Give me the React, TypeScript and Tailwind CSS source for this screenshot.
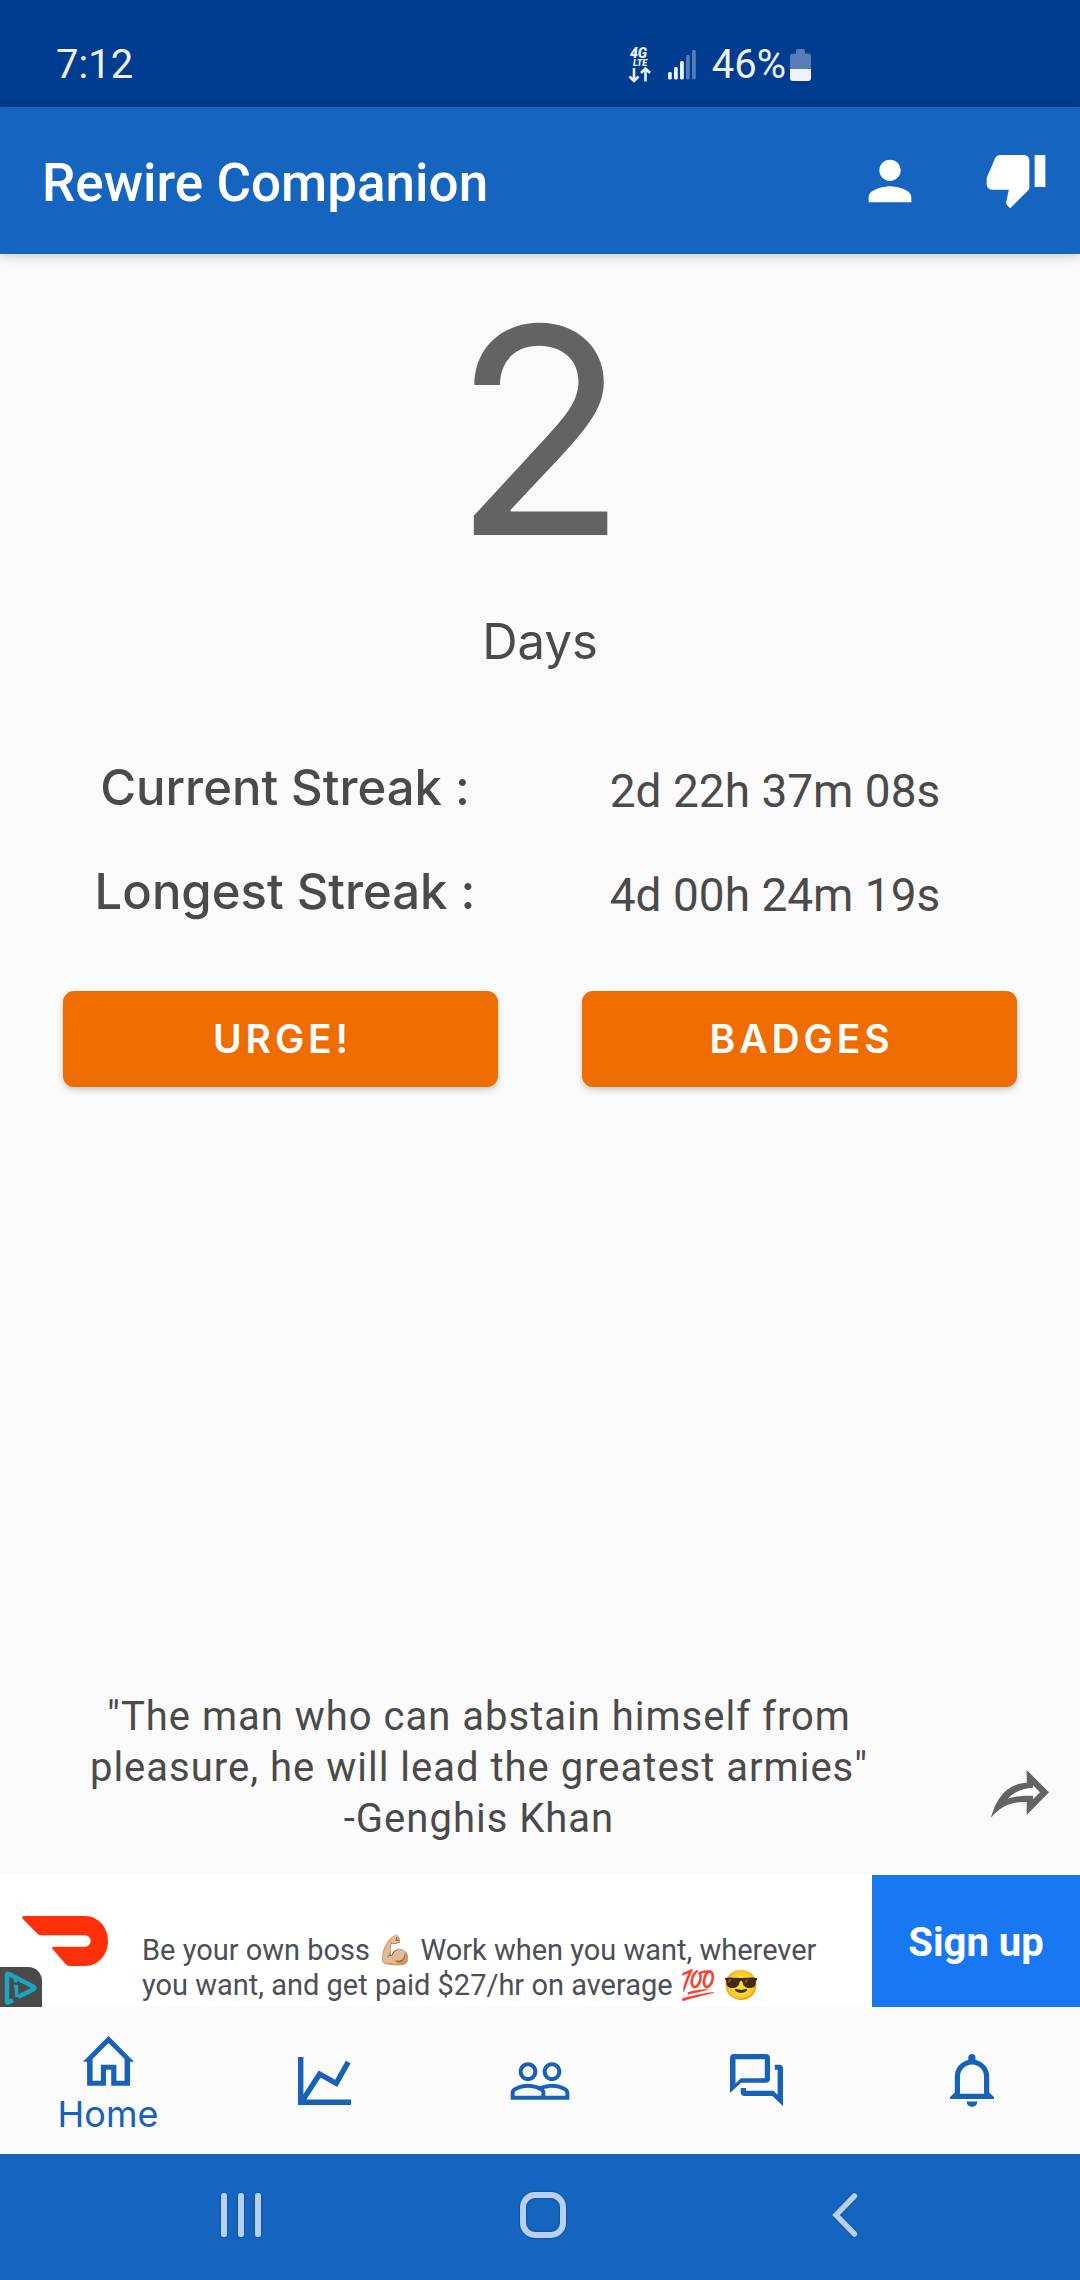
import type { ReactNode } from 'react';
import { MdPeopleOutline, MdPerson, MdThumbDown } from 'react-icons/md';

type Streak = { label: string; value: string };

const STREAKS: ReadonlyArray<Streak> = [
    { label: 'Current Streak :', value: '2d 22h 37m 08s' },
    { label: 'Longest Streak :', value: '4d 00h 24m 19s' },
];

const ACTIONS: ReadonlyArray<string> = ['URGE!', 'BADGES'];

type Tab = { name: string; icon: ReactNode; active?: boolean };

const TABS: ReadonlyArray<Tab> = [
    { name: 'Home', icon: <HomeIcon />, active: true },
    { name: 'Statistics', icon: <ChartIcon /> },
    { name: 'Community', icon: <MdPeopleOutline className="size-16" aria-hidden /> },
    { name: 'Chat', icon: <ChatIcon /> },
    { name: 'Notifications', icon: <BellIcon /> },
];

function HomeIcon() {
    return (
        <svg width="51" height="50" viewBox="0 0 51 50" fill="currentColor" fillRule="evenodd" aria-hidden>
            <path d="M25.5 0L51 25.7H47.1V49.7H28.2V33.7H23V49.7H4.1V25.7H0ZM25.5 7L9.6 23V44.7H17.9V28.7H33.4V44.7H41.6V23Z" />
        </svg>
    );
}

function ChartIcon() {
    return (
        <svg width="53" height="48" viewBox="0 0 53 48" fill="none" stroke="currentColor" strokeWidth="5.4" aria-hidden>
            <path d="M2.7 0V45.3H53" />
            <path d="M4.5 43.5L21.6 17L38.2 26.3L50.2 5" />
        </svg>
    );
}

function ChatIcon() {
    return (
        <svg width="53" height="53" viewBox="0 0 53 53" fill="currentColor" fillRule="evenodd" aria-hidden>
            <path d="M4 0H36a4 4 0 0 1 4 4V24.7a4 4 0 0 1-4 4H11L0 39V4a4 4 0 0 1 4-4ZM5.5 5.3V29.5L10.8 24.2H34.8V5.3Z" />
            <path d="M44.8 10.7H49a4 4 0 0 1 4 4V52L42.4 42H14.7a4 4 0 0 1-4-4V34H15.9V36.7H43.5L47.6 40.8V15.7H44.8Z" />
        </svg>
    );
}

function BellIcon() {
    return (
        <svg width="44" height="53" viewBox="0 0 44 53" fill="currentColor" fillRule="evenodd" aria-hidden>
            <path d="M18.3 3.6a3.6 3.6 0 0 1 7.2 0V5.9A17.2 17.2 0 0 1 39.2 22.5V38.5L44 43.3V45H0V43.3L4.8 38.5V22.5A17.2 17.2 0 0 1 18.3 5.9ZM10 39.7H34V22.6a12 12 0 0 0-24 0Z" />
            <path d="M16.6 47.4H27.4a5.4 5.4 0 0 1-10.8 0Z" />
        </svg>
    );
}

function ShareIcon() {
    return (
        <svg width="58" height="48" viewBox="0 0 58 48" aria-hidden>
            <path d="M0 47.7C5 30 14 14 35.7 12.7V0L58 22.3L35.7 45V32C22 31 9 36 0 47.7Z" fill="#636363" />
            <path d="M16.7 28.7C23 22 31 18.5 42 17.7V15.3L49 22.3L42 29.3V25.7C32 25.5 24 26 16.7 28.7Z" fill="#fff" />
        </svg>
    );
}

function NetworkIcon() {
    return (
        <svg width="24" height="40" viewBox="0 0 24 40" fill="#eef3ff" aria-hidden>
            <text x="2" y="13" fontFamily="Roboto, sans-serif" fontSize="14" fontWeight="900" fontStyle="italic">
                4G
            </text>
            <text x="5" y="21" fontFamily="Roboto, sans-serif" fontSize="9" fontWeight="900" fontStyle="italic">
                LTE
            </text>
            <path d="M6 23V35.5M1.5 31.5L6 36L10.5 31.5M17.5 36.5V24M13 28L17.5 23.5L22 28" fill="none" stroke="#eef3ff" strokeWidth="2.6" />
        </svg>
    );
}

function SignalIcon() {
    return (
        <svg width="28" height="30" viewBox="0 0 28 30" fill="#eef3ff" aria-hidden>
            <rect x="0" y="22" width="3.8" height="7.4" rx="1.5" />
            <rect x="6" y="17" width="3.8" height="12.4" rx="1.5" />
            <rect x="12" y="11" width="3.8" height="18.4" rx="1.5" />
            <rect x="18" y="5" width="3.8" height="24.4" rx="1.5" opacity=".35" />
            <rect x="24" y="0" width="3.8" height="29.4" rx="1.5" opacity=".35" />
        </svg>
    );
}

function BatteryIcon() {
    return (
        <svg width="21" height="32" viewBox="0 0 21 32" aria-hidden>
            <path d="M6 2q0-2 2-2H13q2 0 2 2V4.5H18q3 0 3 3V20H0V7.5q0-3 3-3H6Z" fill="#567db6" />
            <path d="M0 20H21V29q0 3-3 3H3q-3 0-3-3Z" fill="#eef3ff" />
        </svg>
    );
}

function StatusBar() {
    return (
        <div className="flex h-[107px] items-center bg-[#003c8f] pt-[22px] pr-[269px] pl-14 text-[40px] leading-[48px] text-[#eef3ff]">
            <span>7:12</span>
            <div className="ml-auto flex items-center">
                <NetworkIcon />
                <span className="ml-4">
                    <SignalIcon />
                </span>
                <span className="ml-4">46%</span>
                <span className="ml-1">
                    <BatteryIcon />
                </span>
            </div>
        </div>
    );
}

function AppBar() {
    return (
        <header className="relative flex h-[147px] items-center bg-[#1565c0] pr-8 pl-[42px] text-white shadow-[0_2px_12px_rgba(0,0,0,0.2)]">
            <h1 className="pt-1 text-[53px] leading-[64px] font-medium">Rewire Companion</h1>
            <div className="ml-auto flex items-center gap-[62px]">
                <button type="button" aria-label="Profile">
                    <MdPerson className="size-16" aria-hidden />
                </button>
                <button type="button" aria-label="Report relapse" className="pb-1">
                    <MdThumbDown className="size-16" aria-hidden />
                </button>
            </div>
        </header>
    );
}

function AdBanner() {
    return (
        <aside className="relative flex h-[132px] bg-white">
            <div className="w-[142px] shrink-0 pt-[41px] pl-[22px]">
                <svg width="86" height="50" viewBox="0 0 86 50" fill="#ff3008" aria-hidden>
                    <path d="M2 0H63C76 0 86 11 86 25S76 50 63 50H48Q45.5 50 44 48.5L30.5 33Q29 30.7 32 30.7H63a5.7 5.7 0 0 0 0-11.4H20Q17 19.3 15.5 17.8L.8 3Q-.8 0 2 0Z" />
                </svg>
            </div>
            <p className="flex-1 pt-[58px] pr-4 text-[29px] leading-[35px] text-[#4b4f56]">
                Be your own boss 💪🏼 Work when you want, wherever you want, and get paid $27/hr on average 💯 😎
            </p>
            <a href="#signup" className="flex w-[208px] shrink-0 items-center justify-center bg-[#1877f2] pt-1 text-[40px] font-bold text-white">
                Sign up
            </a>
            <span className="absolute bottom-0 left-0 rounded-tr-[14px] bg-[#4a4a4a]">
                <svg width="42" height="40" viewBox="0 0 42 40" fill="none" stroke="#1ba5c0" strokeLinejoin="round" aria-hidden>
                    <path d="M13 33L8 35.5Q7 36 7 34V8Q7 6 9 7L33 19.5Q36 21 33 22.5L18 30" strokeWidth="4.5" />
                    <path d="M15.5 12V15.5M14 19.5H16.5V30" strokeWidth="3.5" />
                </svg>
            </span>
        </aside>
    );
}

function TabBar() {
    return (
        <nav aria-label="Main navigation" className="grid h-[147px] grid-cols-5 bg-[#fafafa] text-[#1861b8]">
            {TABS.map((tab) => (
                <a key={tab.name} href={`#${tab.name.toLowerCase()}`} aria-label={tab.name} className="flex flex-col items-center justify-center">
                    {tab.icon}
                    {tab.active && <span className="-mb-2 pt-2 font-[Inter,sans-serif] text-4xl leading-10">{tab.name}</span>}
                </a>
            ))}
        </nav>
    );
}

function SystemBar() {
    return (
        <div className="grid h-[126px] grid-cols-3 bg-[#1565c0] pr-[84px] pb-1 pl-[90px] text-[#b7d0f2]">
            <button type="button" aria-label="Recent apps" className="flex items-center justify-center">
                <svg width="42" height="44" viewBox="0 0 42 44" fill="currentColor" className="drop-shadow-[0_0_1px_rgba(0,0,0,0.4)]" aria-hidden>
                    <rect x="1" y="0" width="6" height="44" rx="2.5" />
                    <rect x="18" y="0" width="6" height="44" rx="2.5" />
                    <rect x="35" y="0" width="6" height="44" rx="2.5" />
                </svg>
            </button>
            <button type="button" aria-label="Home screen" className="flex items-center justify-center">
                <svg width="48" height="48" viewBox="0 0 48 48" fill="none" stroke="currentColor" strokeWidth="6" className="drop-shadow-[0_0_1px_rgba(0,0,0,0.4)]" aria-hidden>
                    <rect x="4" y="4" width="40" height="40" rx="12" />
                </svg>
            </button>
            <button type="button" aria-label="Back" className="flex items-center justify-center">
                <svg width="26" height="44" viewBox="0 0 26 44" fill="none" stroke="currentColor" strokeWidth="5.5" strokeLinecap="round" className="drop-shadow-[0_0_1px_rgba(0,0,0,0.4)]" aria-hidden>
                    <path d="M22.5 3L4 22L22.5 41" />
                </svg>
            </button>
        </div>
    );
}

export default function App() {
    return (
        <div className="flex min-h-screen flex-col bg-[#fafafa] font-[Roboto,sans-serif] text-[#4a4a4a]">
            <StatusBar />
            <AppBar />
            <main className="flex flex-1 flex-col pt-8">
                <div className="text-center font-[Inter,sans-serif]">
                    <p className="text-[288px] leading-[288px] text-[#636363]">2</p>
                    <p className="mt-10 text-[49px] leading-[56px]">Days</p>
                </div>

                <dl className="mt-[90px] flex flex-col gap-[42px] pr-[60px] pl-10 text-center">
                    {STREAKS.map((streak) => (
                        <div key={streak.label} className="grid grid-cols-2">
                            <dt className="font-[Inter,sans-serif] text-[49px] leading-[56px] font-medium">{streak.label}</dt>
                            <dd className="text-[46px] leading-[62px]">{streak.value}</dd>
                        </div>
                    ))}
                </dl>

                <div className="mt-[65px] grid grid-cols-2 gap-[84px] px-[63px]">
                    {ACTIONS.map((action) => (
                        <button
                            key={action}
                            type="button"
                            className="h-24 rounded-[11px] bg-[#ef6c00] pl-1 font-[Inter,sans-serif] text-[39px] font-semibold tracking-widest text-white shadow-[0_3px_6px_rgba(0,0,0,0.2)]"
                        >
                            {action}
                        </button>
                    ))}
                </div>

                <div className="mt-auto flex items-end pr-[31px] pb-[31px] pl-[82px]">
                    <blockquote className="w-[794px] text-center text-[40px] leading-[51px] tracking-wide">
                        "The man who can abstain himself from pleasure, he will lead the greatest armies"
                        <br />
                        -Genghis Khan
                    </blockquote>
                    <button type="button" aria-label="Share quote" className="mb-[26px] ml-auto">
                        <ShareIcon />
                    </button>
                </div>
            </main>
            <AdBanner />
            <TabBar />
            <SystemBar />
        </div>
    );
}
